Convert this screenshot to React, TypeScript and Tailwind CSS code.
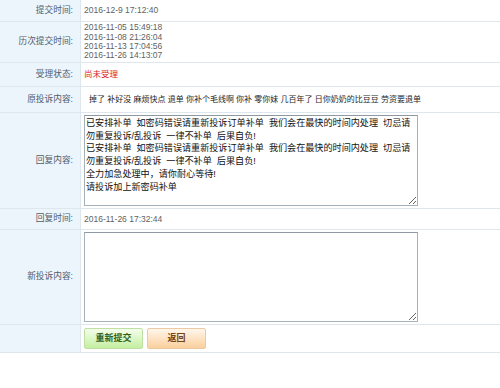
import React from "react";

const cjk = "font-['Liberation_Sans','Noto_Sans_CJK_SC',sans-serif]";

function Row({
  label,
  h,
  children,
}: {
  label: string;
  h: string;
  children?: React.ReactNode;
}) {
  return (
    <div className={`flex border-b border-[#dfe7ee] ${h}`}>
      <div className="w-[81px] shrink-0 flex items-center justify-end pr-[7px] bg-[#edf5fc] border-r border-[#dfe7ee] text-[8.7px] text-[#4f5d6c]">
        {label}
      </div>
      <div className="flex-1 flex items-center pl-[3px]">{children}</div>
    </div>
  );
}

const reply = [
  "已安排补单  如密码错误请重新投诉订单补单  我们会在最快的时间内处理  切忌请",
  "勿重复投诉/乱投诉  一律不补单  后果自负!",
  "已安排补单  如密码错误请重新投诉订单补单  我们会在最快的时间内处理  切忌请",
  "勿重复投诉/乱投诉  一律不补单  后果自负!",
  "全力加急处理中，请你耐心等待!",
  "请投诉加上新密码补单",
].join("\n");

export default function App() {
  return (
    <div className={`w-[500px] h-[388px] bg-white overflow-hidden ${cjk}`}>
      <Row label="提交时间:" h="h-[22px]">
        <span className="text-[8.5px] text-[#5f5f5f]">2016-12-9 17:12:40</span>
      </Row>
      <Row label="历次提交时间:" h="h-[41px]">
        <div className="text-[8.5px] leading-[9.3px] text-[#5f5f5f]">
          <div>2016-11-05 15:49:18</div>
          <div>2016-11-08 21:26:04</div>
          <div>2016-11-13 17:04:56</div>
          <div>2016-11-26 14:13:07</div>
        </div>
      </Row>
      <Row label="受理状态:" h="h-[24px]">
        <span className="text-[8.5px] text-[#d8232a]">尚未受理</span>
      </Row>
      <Row label="原投诉内容:" h="h-[26px]">
        <span className="pl-[5px] text-[8px] text-[#1e1e1e] whitespace-pre">
          掉了 补好没 麻烦快点 退单 你补个毛线啊 你补 零你妹 几百年了 日你奶奶的比豆豆 劳资要退单
        </span>
      </Row>
      <Row label="回复内容:" h="h-[96px]">
        <textarea
          readOnly
          wrap="off"
          value={reply}
          className="w-[334px] h-[91px] resize-y overflow-hidden border border-[#a7b1ba] border-t-[#8e99a3] bg-white px-[1px] pt-[1px] text-[9.1px] leading-[12.7px] text-[#111] font-['Liberation_Sans','Noto_Sans_CJK_SC',sans-serif] whitespace-pre outline-none"
        />
      </Row>
      <Row label="回复时间:" h="h-[21px]">
        <span className="text-[8.5px] text-[#5f5f5f]">2016-11-26 17:32:44</span>
      </Row>
      <Row label="新投诉内容:" h="h-[95px]">
        <textarea
          className="w-[334px] h-[90px] resize-y border border-[#a7b1ba] border-t-[#8e99a3] bg-white outline-none"
          defaultValue=""
        />
      </Row>
      <Row label="" h="h-[28px]">
        <div className="flex gap-[4px]">
          <button className="w-[59px] h-[21px] rounded-[2px] border border-[#bfe0a4] bg-gradient-to-b from-[#f4fdec] via-[#dcf7c6] to-[#c4ee9f] text-[9px] font-bold text-[#35601a]">
            重新提交
          </button>
          <button className="w-[59px] h-[21px] rounded-[2px] border border-[#edc9a3] bg-gradient-to-b from-[#fff6ea] via-[#fde3c4] to-[#f9cf9c] text-[9px] font-bold text-[#754412]">
            返回
          </button>
        </div>
      </Row>
    </div>
  );
}
